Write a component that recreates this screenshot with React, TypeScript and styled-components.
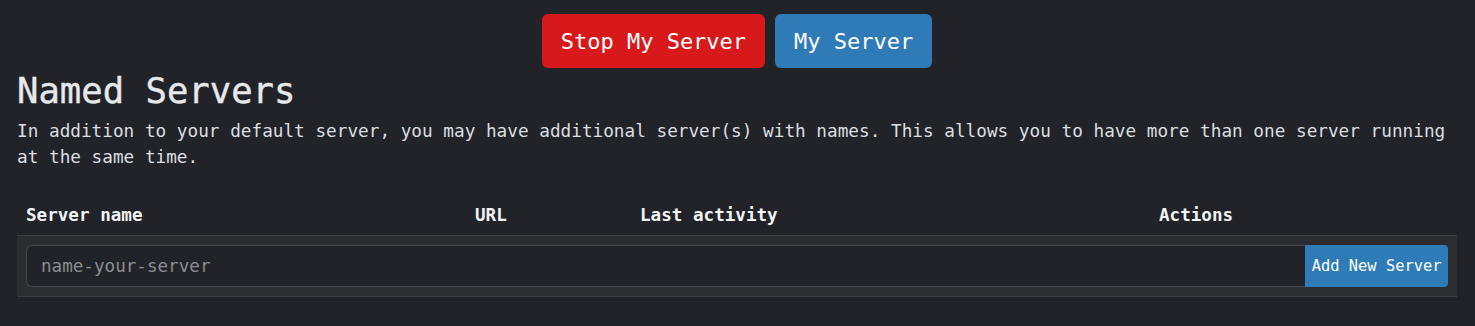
import React from "react";
import styled, { createGlobalStyle } from "styled-components";

const GlobalStyle = createGlobalStyle`
  html, body {
    margin: 0;
    padding: 0;
    background-color: #212328;
    color: #e3e5e8;
    font-family: "DejaVu Sans Mono", "Liberation Mono", monospace;
  }
`;

const columns = ["Server name", "URL", "Last activity", "Actions"];

function App() {
  return (
    <Page>
      <GlobalStyle />
      <TopBar>
        <ActionButton $tone="danger">Stop My Server</ActionButton>
        <ActionButton $tone="primary">My Server</ActionButton>
      </TopBar>
      <Title>Named Servers</Title>
      <Lead>
        In addition to your default server, you may have additional server(s)
        with names. This allows you to have more than one server running at the
        same time.
      </Lead>
      <Table>
        <HeadRow>
          {columns.map((c) => (
            <HeadCell key={c}>{c}</HeadCell>
          ))}
        </HeadRow>
        <AddRow>
          <NameInput type="text" placeholder="name-your-server" />
          <AddButton>Add New Server</AddButton>
        </AddRow>
      </Table>
    </Page>
  );
}

const Page = styled.div`
  padding: 14px 18px 20px 17px;
`;

const TopBar = styled.div`
  display: flex;
  justify-content: center;
  gap: 10px;
`;

const ActionButton = styled.button<{ $tone: "danger" | "primary" }>`
  height: 54px;
  padding: 0 19px;
  border: none;
  border-radius: 6px;
  font-family: inherit;
  font-size: 22px;
  color: #ffffff;
  background-color: ${(p) => (p.$tone === "danger" ? "#d7191c" : "#2e7bb8")};
`;

const Title = styled.h1`
  margin: 2px 0 0 0;
  font-size: 35.6px;
  font-weight: 500;
  line-height: 42px;
  color: #e6e8eb;
  -webkit-text-stroke: 0.4px #e6e8eb;
`;

const Lead = styled.p`
  margin: 6px 0 0 0;
  font-size: 17.72px;
  line-height: 26px;
  color: #dcdee1;
`;

const Table = styled.div`
  margin-top: 24px;
`;

const HeadRow = styled.div`
  display: grid;
  grid-template-columns: 449px 165px 519px 1fr;
  height: 41px;
  align-items: center;
`;

const HeadCell = styled.div`
  padding: 0 9px;
  font-size: 17.6px;
  font-weight: bold;
  color: #f2f3f5;
`;

const AddRow = styled.div`
  display: flex;
  padding: 9px;
  background-color: #2b2d31;
  border-top: 1px solid #3c3e43;
  border-bottom: 1px solid #3c3e43;
`;

const NameInput = styled.input`
  flex: 1;
  height: 42px;
  box-sizing: border-box;
  padding: 0 14px;
  border: 1px solid #46484d;
  border-right: none;
  border-radius: 6px 0 0 6px;
  background-color: #212328;
  color: #e3e5e8;
  font-family: inherit;
  font-size: 17.6px;
  outline: none;

  &::placeholder {
    color: #8a8d92;
  }
`;

const AddButton = styled.button`
  height: 42px;
  padding: 0 6.5px;
  border: none;
  border-radius: 0 4px 4px 0;
  background-color: #2e7bb8;
  color: #ffffff;
  font-family: inherit;
  font-size: 15.4px;
`;

export default App;
